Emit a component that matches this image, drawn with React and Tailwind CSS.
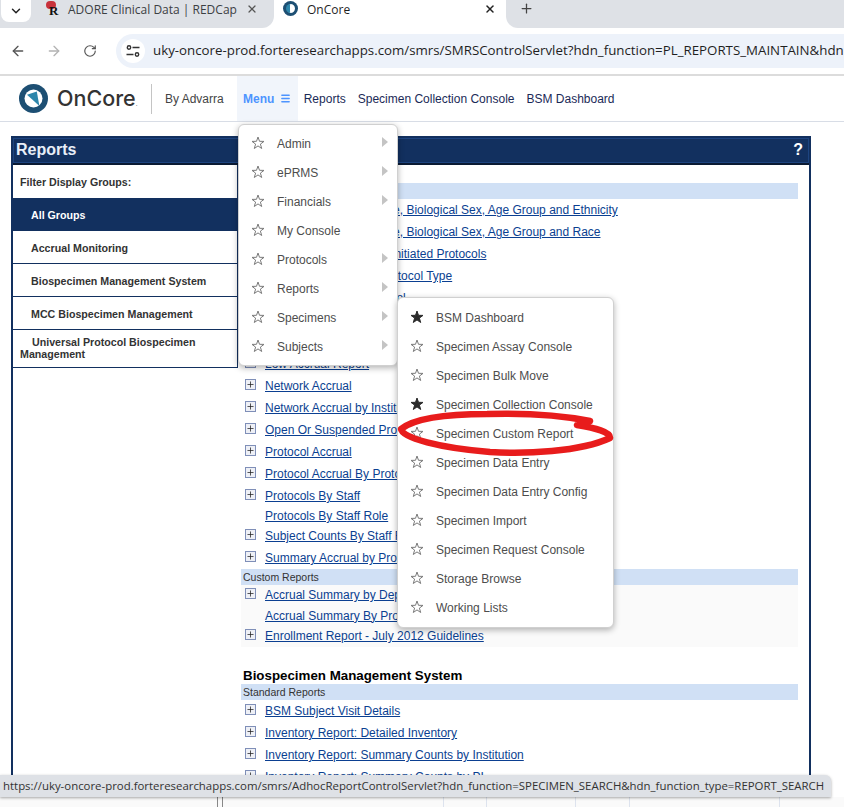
import { ArrowLeft, ArrowRight, RotateCw, Plus, X, ChevronDown, Menu } from 'lucide-react';

const mainMenu = [
  ['Admin', true],
  ['ePRMS', true],
  ['Financials', true],
  ['My Console', false],
  ['Protocols', true],
  ['Reports', true],
  ['Specimens', true],
  ['Subjects', true],
];

const specimenMenu = [
  ['BSM Dashboard', true],
  ['Specimen Assay Console', false],
  ['Specimen Bulk Move', false],
  ['Specimen Collection Console', true],
  ['Specimen Custom Report', false],
  ['Specimen Data Entry', false],
  ['Specimen Data Entry Config', false],
  ['Specimen Import', false],
  ['Specimen Request Console', false],
  ['Storage Browse', false],
  ['Working Lists', false],
];

const groups = [
  'Accrual Monitoring',
  'Biospecimen Management System',
  'MCC Biospecimen Management',
];

const accrualRows = [
  ['Accrual Summary by Site, Biological Sex, Age Group and Ethnicity', true],
  ['Accrual Summary by Site, Biological Sex, Age Group and Race', true],
  ['Accrual By Investigator Initiated Protocols', true],
  ['Accrual Summary by Protocol Type', true],
  ['Clinical Research Protocol', true],
  ['Data Table 3', true],
  ['Data Table 4', true],
  ['Low Accrual Report', true],
  ['Network Accrual', true],
  ['Network Accrual by Institution', true],
  ['Open Or Suspended Protocols', true],
  ['Protocol Accrual', true],
  ['Protocol Accrual By Protocol Type', true],
  ['Protocols By Staff', true],
  ['Protocols By Staff Role', false],
  ['Subject Counts By Staff Role', true],
  ['Summary Accrual by Protocol', true],
];

const customRows = [
  ['Accrual Summary by Department', true, 'h-[20px]'],
  ['Accrual Summary By Protocol', false, 'h-[21px]'],
  ['Enrollment Report - July 2012 Guidelines', true, 'h-[20px]'],
];

const bsmRows = [
  ['BSM Subject Visit Details', true],
  ['Inventory Report: Detailed Inventory', true],
  ['Inventory Report: Summary Counts by Institution', true],
  ['Inventory Report: Summary Counts by PI', true],
];

function Logo() {
  return (
    <svg width="29" height="29" viewBox="0 0 29 29">
      <circle cx="14.5" cy="14.5" r="14.5" fill="#1d4f73" />
      <circle cx="14.5" cy="14.5" r="9" fill="#ffffff" />
      <path d="M8 10.8 L17.8 7.6 L20.4 22 Z" fill="#2d86ab" />
    </svg>
  );
}

function TuneIcon() {
  return (
    <svg width="14" height="14" viewBox="0 0 14 14" fill="none" stroke="#333333" strokeWidth="1.4">
      <circle cx="3" cy="3.5" r="1.7" />
      <path d="M6.5 3.5 H13.5" />
      <circle cx="11" cy="10.5" r="1.7" />
      <path d="M0.5 10.5 H7.5" />
    </svg>
  );
}

function StarIcon({ filled }) {
  return (
    <svg width="14" height="14" viewBox="0 0 14 14" className="shrink-0 -mt-[2px]">
      <polygon
        points="7,1 8.5,5.3 13,5.4 9.4,8.1 10.7,12.5 7,9.9 3.3,12.5 4.6,8.1 1,5.4 5.5,5.3"
        fill={filled ? '#2b2b2b' : 'none'}
        stroke={filled ? '#2b2b2b' : '#7a7a7a'}
        strokeWidth="1"
      />
    </svg>
  );
}

function PlusBox() {
  return (
    <span className="w-[11px] h-[11px] border border-[#7f8fb8] bg-[#eef0f6] flex items-center justify-center">
      <Plus size={9} strokeWidth={2} color="#222222" />
    </span>
  );
}

function ReportRow({ label, expand, h }) {
  return (
    <div className={`flex items-center ${h}`}>
      <div className="w-[24px] pl-[4px] -mt-[3px] shrink-0">{expand && <PlusBox />}</div>
      <a className="text-[#0b3f91] underline whitespace-nowrap">{label}</a>
    </div>
  );
}

function SectionBar({ children }) {
  return <div className="bg-[#d0e0f5] h-4 leading-4 pl-[2px] text-[10.5px] text-[#333333]">{children}</div>;
}

function MenuItem({ label, filled, arrow }) {
  return (
    <div className="flex items-center h-[29px]">
      <span className="ml-[12px] mr-[12px] flex"><StarIcon filled={filled} /></span>
      <span className="text-[#4d4d4d] whitespace-nowrap">{label}</span>
      {arrow && (
        <span className="ml-auto mr-[9px] -mt-[3px] w-0 h-0 border-y-[5px] border-y-transparent border-l-[6px] border-l-[#c4c4c4]" />
      )}
    </div>
  );
}

export default function App() {
  return (
    <div className="relative w-[844px] h-[807px] overflow-hidden bg-white font-['Liberation_Sans',Arial,sans-serif] text-[12px]">
      {/* browser tabs */}
      <div className="flex h-[28px] bg-white font-['Open_Sans',sans-serif] text-[12px] text-[#3c4043] whitespace-nowrap">
        <div className="w-[274px] h-full bg-[#dee1e6] rounded-br-xl flex items-start">
          <div className="w-[30px] h-[22px] bg-white rounded-b-lg ml-px flex items-center justify-center">
            <ChevronDown size={14} strokeWidth={2.5} color="#222222" />
          </div>
          <span className="relative ml-[14px] w-[16px] h-[16px] mt-px">
            <span className="absolute left-[1px] top-0 w-[10px] h-[8px] rounded-full bg-[#c8323c]" />
            <span className="absolute left-[4px] top-[3px] text-[13px] leading-[13px] font-bold font-['Liberation_Serif',serif] text-[#111111]">R</span>
          </span>
          <span className="ml-[7px] mt-px">ADORE Clinical Data | REDCap</span>
          <X size={12} strokeWidth={2.4} className="ml-auto mr-[16px] mt-[3px]" color="#555555" />
        </div>
        <div className="w-[232px] flex items-start text-[#1f1f1f]">
          <span className="ml-[9px] mt-px w-[15px] h-[15px] rounded-full bg-[#1d4f73] flex items-center justify-center">
            <span className="w-[9px] h-[9px] rounded-full bg-white border-l-[4px] border-l-[#2d86ab]" />
          </span>
          <span className="ml-[9px] mt-px">OnCore</span>
          <X size={12} strokeWidth={3} className="ml-auto mr-[10px] mt-[3px]" color="#222222" />
        </div>
        <div className="flex-1 h-full bg-[#dee1e6] rounded-bl-xl flex items-start">
          <Plus size={15} strokeWidth={2} className="ml-[13px] mt-px" color="#444444" />
        </div>
      </div>

      {/* toolbar */}
      <div className="flex items-center h-[48px] bg-white border-b-2 border-b-[#dcdcdc] font-['Open_Sans',sans-serif]">
        <ArrowLeft size={16} strokeWidth={2} className="ml-[10px]" color="#555555" />
        <ArrowRight size={16} strokeWidth={2} className="ml-[20px]" color="#b3b3b3" />
        <RotateCw size={14} strokeWidth={2} className="ml-[21px]" color="#555555" />
        <div className="ml-[19px] flex-1 h-[34px] bg-[#edf2fa] rounded-l-full flex items-center overflow-hidden">
          <span className="ml-[5px] w-[24px] h-[24px] rounded-full bg-white flex items-center justify-center shrink-0">
            <TuneIcon />
          </span>
          <span className="ml-[8px] text-[13.3px] text-[#1f1f1f] whitespace-nowrap">
            uky-oncore-prod.forteresearchapps.com/smrs/SMRSControlServlet?hdn_function=PL_REPORTS_MAINTAIN&hdn
          </span>
        </div>
      </div>

      {/* oncore header */}
      <div className="flex items-center h-[46px] border-b border-b-[#d8dde6]">
        <div className="ml-[19px]"><Logo /></div>
        <span className="ml-[9px] w-[94px] font-['Inter',sans-serif] text-[21.5px] font-medium text-[#333333]">OnCore<span className="text-[6px]">.</span></span>
        <div className="h-[30px] w-px bg-[#c4c4c4]" />
        <span className="ml-[13px] text-[#444444]">By Advarra</span>
        <div className="ml-[13px] h-full w-[61px] bg-[#f1f5fb] flex items-center justify-center gap-[6px] font-bold text-[#4d94ff]">
          Menu <Menu size={11} strokeWidth={3} color="#4d94ff" />
        </div>
        <div className="ml-[6px] flex gap-[12px] text-[#1b2a57]">
          <span>Reports</span>
          <span>Specimen Collection Console</span>
          <span>BSM Dashboard</span>
        </div>
      </div>

      {/* reports panel */}
      <div className="ml-[11px] mt-[14px] w-[800px] h-[700px] border-2 border-[#12305f] border-b-0">
        <div className="flex items-center justify-between h-[25px] bg-[#12305f] border border-[#1d4480] px-[2px]">
          <span className="text-[16px] font-bold text-[#e8eef8] -mt-[2px]">Reports</span>
          <span className="text-[16px] font-bold text-white mr-[3px] -mt-[2px]">?</span>
        </div>
        <div className="flex border-t-2 border-t-[#0a1a33]">
          <div className="w-[225px] shrink-0 self-start border-b border-[#12305f] border-r font-bold text-[10.67px] text-[#333333]">
            <div className="h-[33px] flex items-center pl-[7px]">Filter Display Groups:</div>
            <div className="h-[33px] flex items-center pl-[18px] bg-[#12305f] text-white">All Groups</div>
            {groups.map((g) => (
              <div key={g} className="h-[33px] flex items-center pl-[18px] pt-px border-b border-[#12305f]">{g}</div>
            ))}
            <div className="h-[37px] pl-[7px] pt-[6px] leading-[12px] indent-[12px]">Universal Protocol Biospecimen Management</div>
          </div>
          <div className="flex-1 pl-[3px] pr-[11px] overflow-hidden">
            <div className="h-[18px]" />
            <SectionBar>Standard Reports</SectionBar>
            {accrualRows.map(([l, e]) => (
              <ReportRow key={l} label={l} expand={e} h={e ? 'h-[22px]' : 'h-[18px]'} />
            ))}
            <SectionBar>Custom Reports</SectionBar>
            <div className="bg-[#fafafa] pb-px">
              {customRows.map(([l, e, h]) => (
                <ReportRow key={l} label={l} expand={e} h={h} />
              ))}
            </div>
            <div className="mt-[20px] h-[17px] text-[13.33px] font-bold text-black pl-[2px] leading-[17px]">Biospecimen Management System</div>
            <SectionBar>Standard Reports</SectionBar>
            {bsmRows.map(([l, e]) => (
              <ReportRow key={l} label={l} expand={e} h="h-[22px]" />
            ))}
          </div>
        </div>
      </div>

      {/* dropdown menus */}
      <div className="absolute left-[238px] top-[124px] w-[160px] h-[242px] bg-white rounded-md border border-[#d0d0d0] shadow-[0_2px_6px_rgba(0,0,0,0.3)] pt-[4px]">
        {mainMenu.map(([l, a]) => (
          <MenuItem key={l} label={l} arrow={a} />
        ))}
      </div>
      <div className="absolute left-[397px] top-[297px] w-[217px] h-[331px] bg-white rounded-md border border-[#d0d0d0] shadow-[0_2px_6px_rgba(0,0,0,0.3)] pt-[5px]">
        {specimenMenu.map(([l, f]) => (
          <MenuItem key={l} label={l} filled={f} />
        ))}
      </div>

      {/* red marker */}
      <svg className="absolute left-[390px] top-[400px]" width="230" height="64" viewBox="0 0 230 64" fill="none">
        <path d="M200 21 C165 14 130 13 97 14 C60 14 25 18 11 29 C12 38 50 48 100 52 C135 54 190 52 220 38 C221 32 205 28 187 25" stroke="#e81c1c" strokeWidth="6.5" strokeLinecap="round" strokeLinejoin="round" />
      </svg>

      {/* status bubble */}
      <div className="absolute left-0 bottom-[10px] w-[831px] h-[22px] bg-[#dee1e6] rounded-tr-md flex items-center pl-[3px] font-['Open_Sans',sans-serif] text-[11.42px] text-[#333333] whitespace-nowrap shadow-[0_1px_3px_rgba(0,0,0,0.35)] z-10">
        https://uky-oncore-prod.forteresearchapps.com/smrs/AdhocReportControlServlet?hdn_function=SPECIMEN_SEARCH&hdn_function_type=REPORT_SEARCH
      </div>
      <div className="absolute left-0 bottom-0 w-full h-[10px] bg-[#fafafa] flex">
        <div className="w-[218px] border-r border-r-[#888888]" />
        <div className="w-[5px] border-r border-r-[#888888]" />
        <div className="w-[221px] border-r border-r-[#dde3ee]" />
        <div className="w-[43px] border-r border-r-[#dde3ee]" />
        <div className="w-[89px] border-r border-r-[#dde3ee]" />
        <div className="w-[54px] border-r border-r-[#dde3ee]" />
        <div className="w-[150px] border-r border-r-[#dde3ee]" />
      </div>
    </div>
  );
}
